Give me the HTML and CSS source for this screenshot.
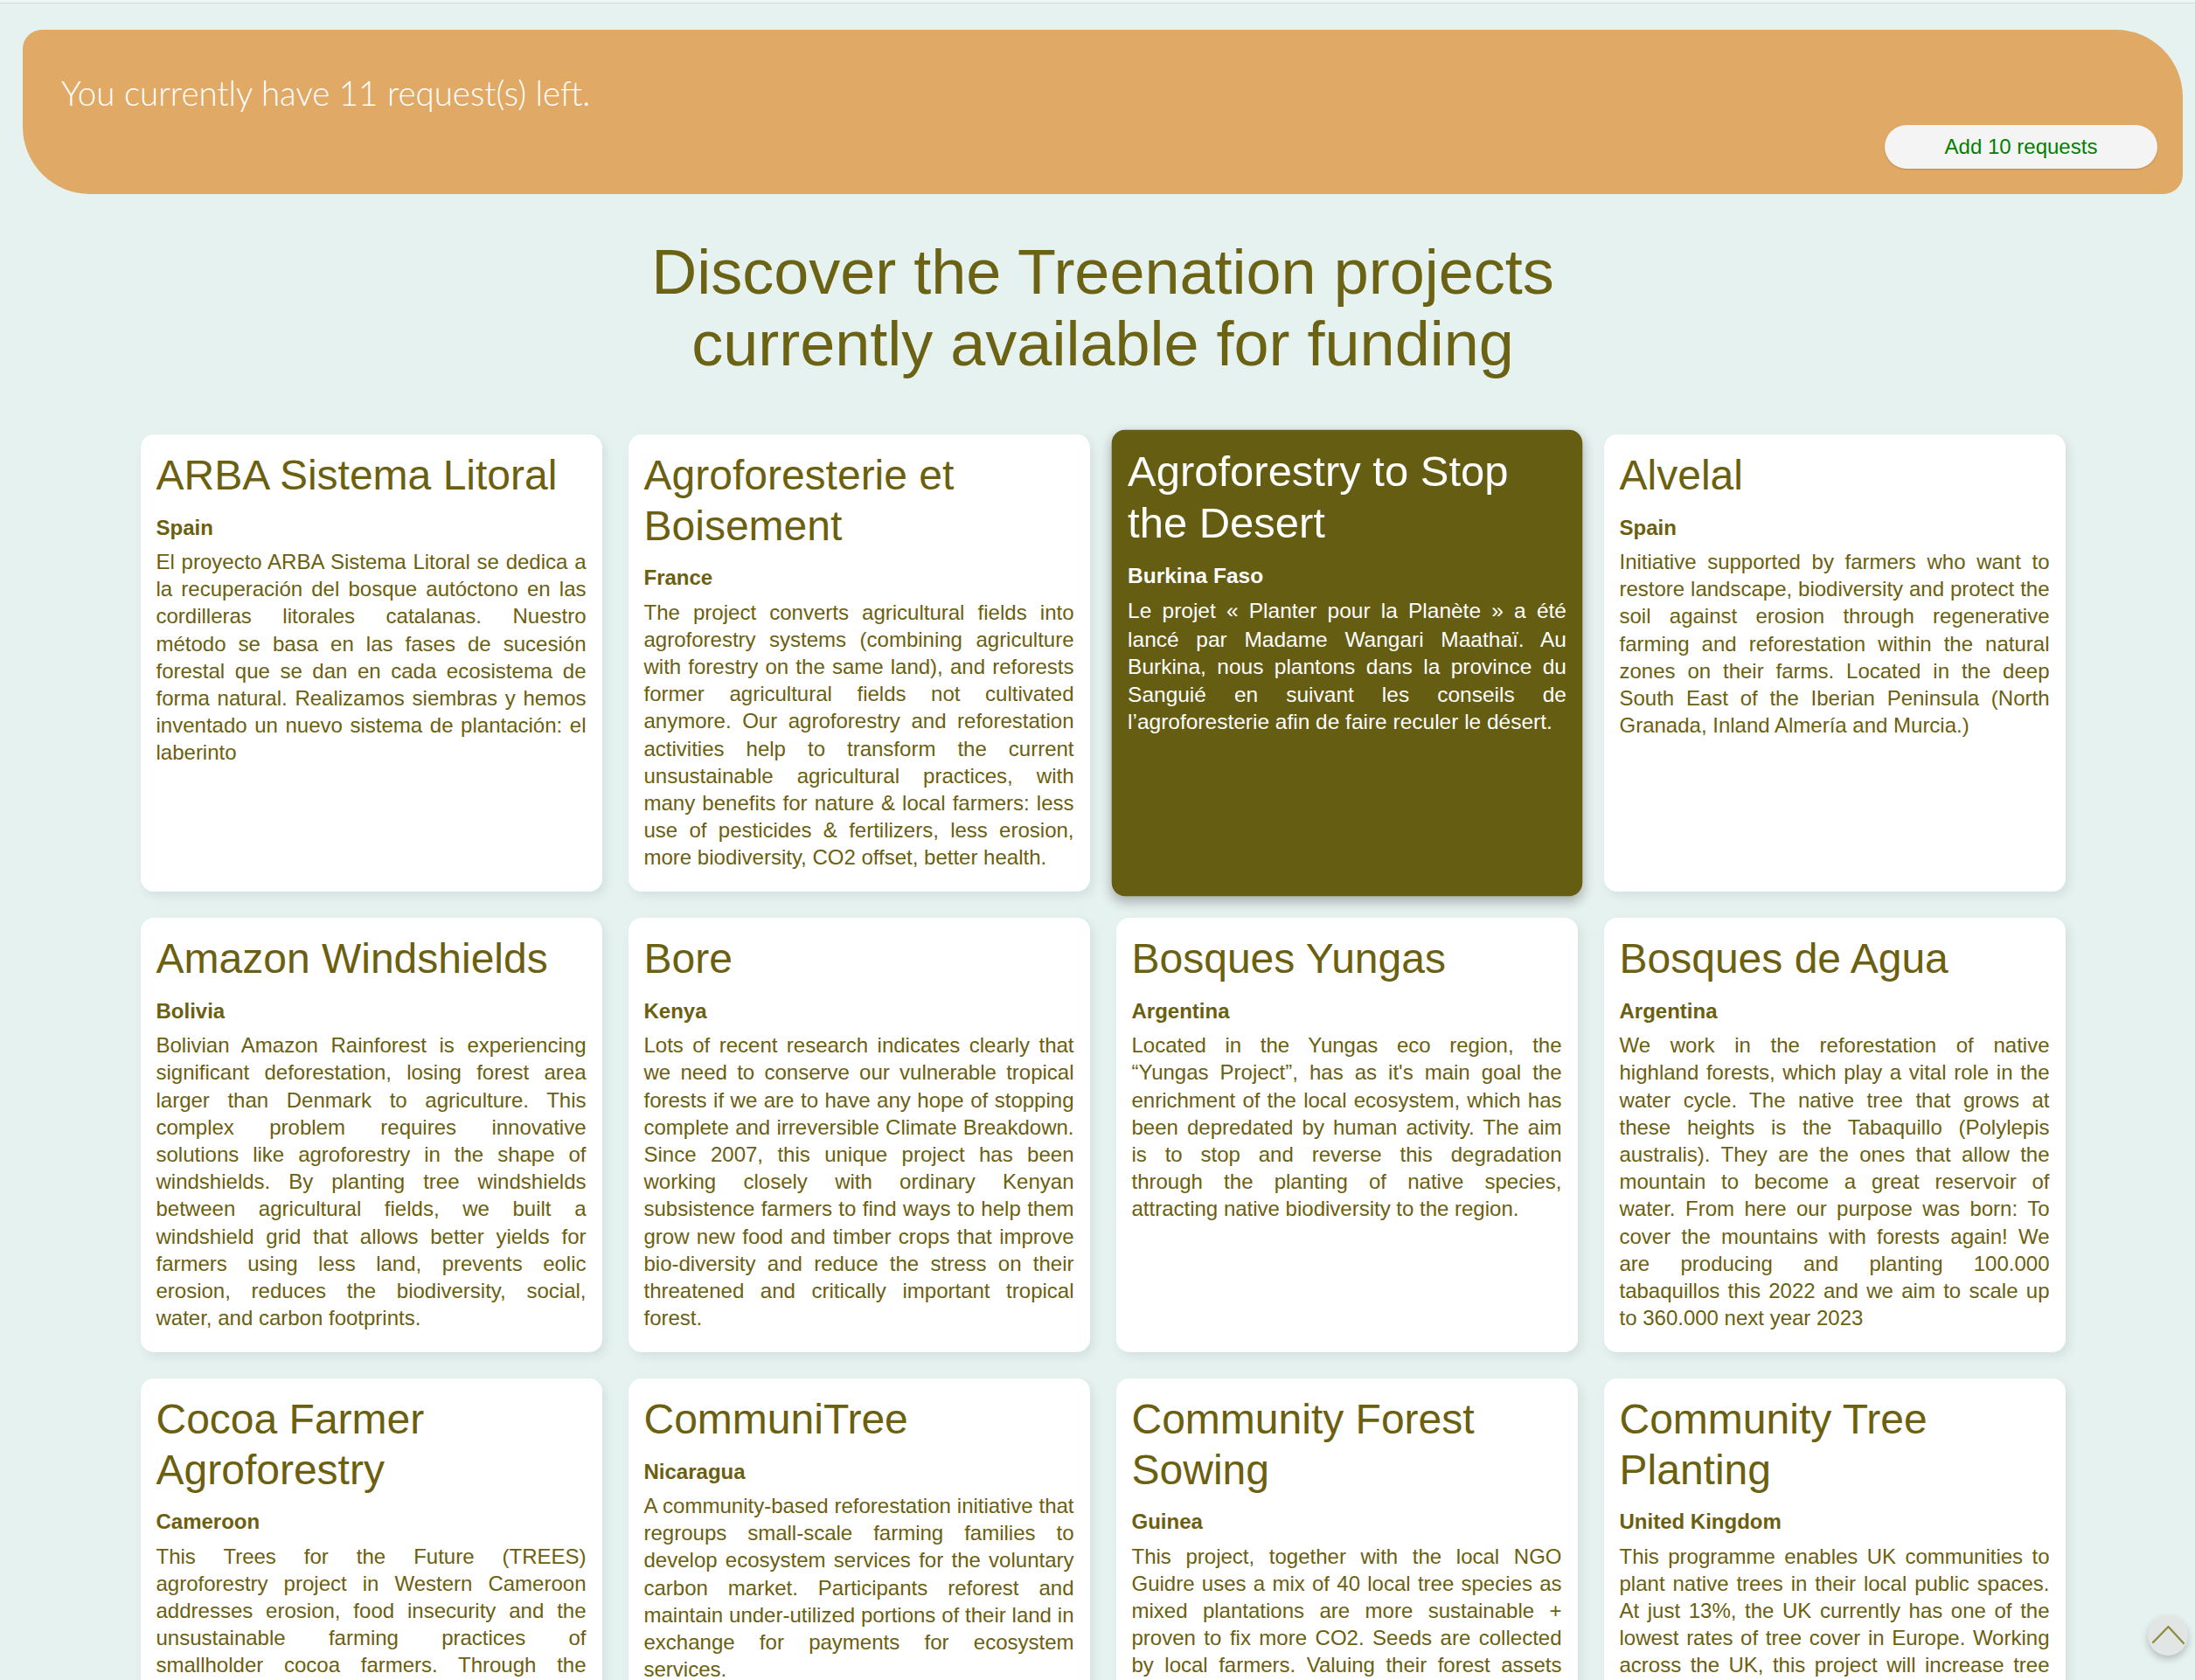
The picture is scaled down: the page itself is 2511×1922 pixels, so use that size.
FILE: index.html
```html
<!DOCTYPE html>
<html lang="en">
<head>
<meta charset="utf-8">
<title>Treenation projects</title>
<link rel="stylesheet" href="styles.css">
</head>
<body>
<div class="topline"></div>
<div class="page">
  <header class="banner">
    <p class="banner-text">You currently have 11 request(s) left.</p>
    <button class="banner-btn" type="button">Add 10 requests</button>
  </header>

  <h1 class="page-title">Discover the Treenation projects currently available for funding</h1>

  <main class="grid">
    <article class="card">
      <h2 class="card-title">ARBA Sistema Litoral</h2>
      <p class="country">Spain</p>
      <p class="desc">El proyecto ARBA Sistema Litoral se dedica a la recuperación del bosque autóctono en las cordilleras litorales catalanas. Nuestro método se basa en las fases de sucesión forestal que se dan en cada ecosistema de forma natural. Realizamos siembras y hemos inventado un nuevo sistema de plantación: el laberinto</p>
    </article>
    <article class="card">
      <h2 class="card-title">Agroforesterie et Boisement</h2>
      <p class="country">France</p>
      <p class="desc">The project converts agricultural fields into agroforestry systems (combining agriculture with forestry on the same land), and reforests former agricultural fields not cultivated anymore. Our agroforestry and reforestation activities help to transform the current unsustainable agricultural practices, with many benefits for nature &amp; local farmers: less use of pesticides &amp; fertilizers, less erosion, more biodiversity, CO2 offset, better health.</p>
    </article>
    <article class="card card-active">
      <h2 class="card-title">Agroforestry to Stop the Desert</h2>
      <p class="country">Burkina Faso</p>
      <p class="desc">Le projet « Planter pour la Planète » a été lancé par Madame Wangari Maathaï. Au Burkina, nous plantons dans la province du Sanguié en suivant les conseils de l’agroforesterie afin de faire reculer le désert.</p>
    </article>
    <article class="card">
      <h2 class="card-title">Alvelal</h2>
      <p class="country">Spain</p>
      <p class="desc">Initiative supported by farmers who want to restore landscape, biodiversity and protect the soil against erosion through regenerative farming and reforestation within the natural zones on their farms. Located in the deep South East of the Iberian Peninsula (North Granada, Inland Almería and Murcia.)</p>
    </article>

    <article class="card">
      <h2 class="card-title">Amazon Windshields</h2>
      <p class="country">Bolivia</p>
      <p class="desc">Bolivian Amazon Rainforest is experiencing significant deforestation, losing forest area larger than Denmark to agriculture. This complex problem requires innovative solutions like agroforestry in the shape of windshields. By planting tree windshields between agricultural fields, we built a windshield grid that allows better yields for farmers using less land, prevents eolic erosion, reduces the biodiversity, social, water, and carbon footprints.</p>
    </article>
    <article class="card">
      <h2 class="card-title">Bore</h2>
      <p class="country">Kenya</p>
      <p class="desc">Lots of recent research indicates clearly that we need to conserve our vulnerable tropical forests if we are to have any hope of stopping complete and irreversible Climate Breakdown. Since 2007, this unique project has been working closely with ordinary Kenyan subsistence farmers to find ways to help them grow new food and timber crops that improve bio-diversity and reduce the stress on their threatened and critically important tropical forest.</p>
    </article>
    <article class="card">
      <h2 class="card-title">Bosques Yungas</h2>
      <p class="country">Argentina</p>
      <p class="desc">Located in the Yungas eco region, the “Yungas Project”, has as it's main goal the enrichment of the local ecosystem, which has been depredated by human activity. The aim is to stop and reverse this degradation through the planting of native species, attracting native biodiversity to the region.</p>
    </article>
    <article class="card">
      <h2 class="card-title">Bosques de Agua</h2>
      <p class="country">Argentina</p>
      <p class="desc">We work in the reforestation of native highland forests, which play a vital role in the water cycle. The native tree that grows at these heights is the Tabaquillo (Polylepis australis). They are the ones that allow the mountain to become a great reservoir of water. From here our purpose was born: To cover the mountains with forests again! We are producing and planting 100.000 tabaquillos this 2022 and we aim to scale up to 360.000 next year 2023</p>
    </article>

    <article class="card">
      <h2 class="card-title">Cocoa Farmer Agroforestry</h2>
      <p class="country">Cameroon</p>
      <p class="desc">This Trees for the Future (TREES) agroforestry project in Western Cameroon addresses erosion, food insecurity and the unsustainable farming practices of smallholder cocoa farmers. Through the Forest Garden Approach, farmers learn to plant and manage diverse, layered gardens of trees and crops that restore the soil and raise their incomes.</p>
    </article>
    <article class="card">
      <h2 class="card-title">CommuniTree</h2>
      <p class="country">Nicaragua</p>
      <p class="desc">A community-based reforestation initiative that regroups small-scale farming families to develop ecosystem services for the voluntary carbon market. Participants reforest and maintain under-utilized portions of their land in exchange for payments for ecosystem services.</p>
    </article>
    <article class="card">
      <h2 class="card-title">Community Forest Sowing</h2>
      <p class="country">Guinea</p>
      <p class="desc">This project, together with the local NGO Guidre uses a mix of 40 local tree species as mixed plantations are more sustainable + proven to fix more CO2. Seeds are collected by local farmers. Valuing their forest assets helps communities protect the remaining forests and earn a fair income.</p>
    </article>
    <article class="card">
      <h2 class="card-title">Community Tree Planting</h2>
      <p class="country">United Kingdom</p>
      <p class="desc">This programme enables UK communities to plant native trees in their local public spaces. At just 13%, the UK currently has one of the lowest rates of tree cover in Europe. Working across the UK, this project will increase tree cover where people live and bring nature closer to everyone.</p>
    </article>
  </main>
</div>

<button class="to-top" type="button" aria-label="Back to top">
  <svg width="46" height="46" viewBox="0 0 46 46" aria-hidden="true"><polyline points="6,31 23.5,13 41,32" fill="none" stroke="#8c8a3e" stroke-width="2.2" stroke-linecap="round" stroke-linejoin="round"/></svg>
</button>
</body>
</html>
```

FILE: styles.css
```css
html, body {
  margin: 0;
  padding: 0;
}

body {
  background: #e6f2f0;
  font-family: "Liberation Sans", Arial, sans-serif;
}

.topline {
  height: 3px;
  background: #eef6f5;
  border-bottom: 1px solid #d6dbda;
}

.page {
  padding: 0 14px 60px 26px;
}

.banner {
  margin-top: 30px;
  background: #e0aa66;
  border-radius: 22px 77px 22px 77px;
  padding: 49px 29px 29px 44px;
  display: flex;
  flex-direction: column;
}

.banner-text {
  margin: 0 0 14px;
  font-family: Lato, "Open Sans", sans-serif;
  font-weight: 300;
  font-size: 38.5px;
  line-height: 1.2;
  color: #ffffff;
}

.banner-btn {
  align-self: flex-end;
  width: 312px;
  height: 50px;
  border: 0;
  border-radius: 25px;
  background: #f4f4f4;
  color: #008000;
  font-family: "Liberation Sans", Arial, sans-serif;
  font-size: 24px;
  box-shadow: 0 1px 2px rgba(120, 80, 30, 0.35);
  padding: 0;
}

.page-title {
  max-width: 1100px;
  margin: 48px auto 0;
  text-align: center;
  font-size: 72px;
  font-weight: normal;
  line-height: normal;
  color: #6b6214;
}

.grid {
  width: 2202px;
  margin: 63px auto 0;
  display: grid;
  grid-template-columns: repeat(4, 1fr);
  gap: 30px;
}

.card {
  background: #ffffff;
  border-radius: 15px;
  padding: 18px 18px 17px;
  color: #6b600f;
  box-shadow: 4px 5px 12px rgba(0, 60, 60, 0.09);
}

.card-title {
  margin: 0 0 15px;
  font-size: 48px;
  font-weight: normal;
  line-height: 1.2;
}

.country {
  margin: 0 0 8px;
  font-size: 24px;
  font-weight: bold;
  line-height: 1.3;
}

.desc {
  margin: 0 0 7px;
  font-size: 24px;
  line-height: 1.3;
  text-align: justify;
}

.card-active,
.card:hover {
  background: #655d12;
  color: #ffffff;
  transform: scale(1.02);
  box-shadow: 0 6px 14px rgba(0, 0, 0, 0.28);
}

.to-top {
  position: fixed;
  right: 8px;
  bottom: 28px;
  width: 46px;
  height: 46px;
  padding: 0;
  border: 0;
  border-radius: 50%;
  background: #e1e5e4;
  box-shadow: 0 4px 8px rgba(0, 0, 0, 0.22);
}

.to-top svg {
  display: block;
}
```
